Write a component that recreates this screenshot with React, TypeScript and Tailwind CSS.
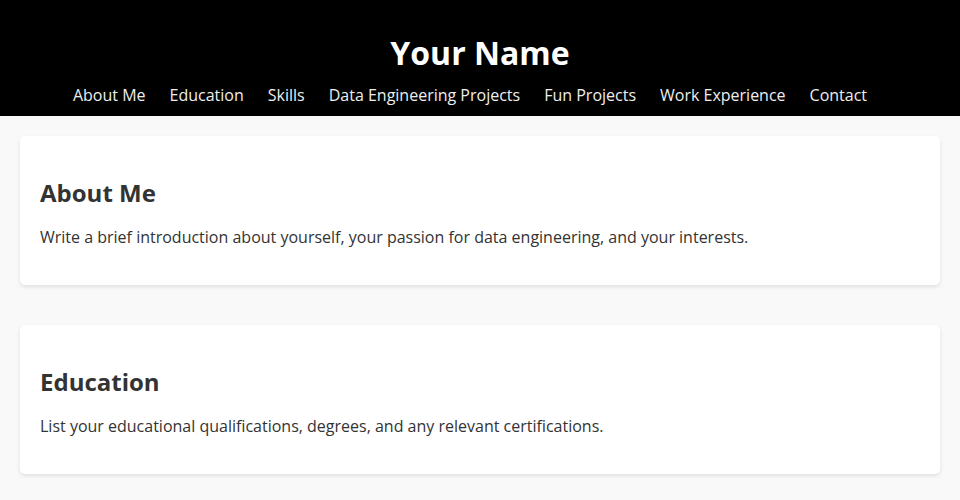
import React from "react";

const links = [
  "About Me",
  "Education",
  "Skills",
  "Data Engineering Projects",
  "Fun Projects",
  "Work Experience",
  "Contact",
];

const sections = [
  {
    title: "About Me",
    text: "Write a brief introduction about yourself, your passion for data engineering, and your interests.",
  },
  {
    title: "Education",
    text: "List your educational qualifications, degrees, and any relevant certifications.",
  },
];

export default function App() {
  return (
    <div
      className="min-h-screen bg-[#f9f9f9] text-[#333]"
      style={{ fontFamily: '"Open Sans", "Liberation Sans", sans-serif' }}
    >
      <header className="bg-black text-white text-center pt-[31px] pb-[10px]">
        <h1 className="text-[32px] font-bold leading-[44px]">Your Name</h1>
        <nav className="mt-[9px] pr-[20px] flex justify-center gap-[24px] text-[16px] leading-[22px]">
          {links.map((l) => (
            <a key={l} href="#" className="text-[#eeeeee]">
              {l}
            </a>
          ))}
        </nav>
      </header>
      <main className="px-[20px] pt-[20px] pb-[26px] flex flex-col gap-[40px]">
        {sections.map((s) => (
          <section
            key={s.title}
            className="bg-white rounded-[5px] shadow-[0_2px_4px_rgba(0,0,0,0.1)] px-[20px] pt-[40px] pb-[37px]"
          >
            <h2 className="text-[24px] font-bold leading-[33px]">{s.title}</h2>
            <p className="mt-[17px] text-[16px] leading-[22px]">{s.text}</p>
          </section>
        ))}
      </main>
    </div>
  );
}
